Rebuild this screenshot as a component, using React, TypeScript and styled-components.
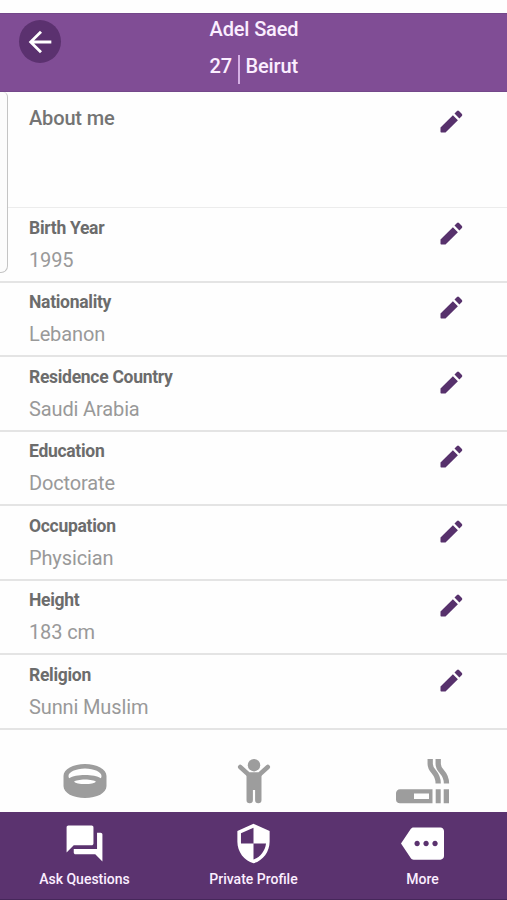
import React from "react";
import styled, { createGlobalStyle } from "styled-components";
import { MdArrowBack, MdMore, MdQuestionAnswer, MdSecurity } from "react-icons/md";

const GlobalStyle = createGlobalStyle`
  * { box-sizing: border-box; }
  body { margin: 0; background: #fefefe; overflow: hidden; }
`;

const Screen = styled.div`
  position: relative;
  display: flex;
  flex-direction: column;
  width: 507px;
  height: 900px;
  padding-top: 12.5px;
  background: #fefefe;
  font-family: Roboto, sans-serif;
`;

const Header = styled.header`
  flex: none;
  display: grid;
  grid-template-columns: 1fr auto 1fr;
  height: 79px;
  padding: 0 18px 0 19px;
  background: #804d95;
  border-top: 1px solid #74488a;
  border-bottom: 1px solid #74488a;
`;

const BackButton = styled.button`
  display: flex;
  align-items: center;
  justify-content: center;
  width: 42px;
  height: 43px;
  margin-top: 6.5px;
  padding: 0;
  border: 0;
  border-radius: 50%;
  background: #5b316f;
  color: #fff;
`;

const Identity = styled.div`
  display: flex;
  flex-direction: column;
  color: #fbeeff;
  font-size: 20px;
  font-weight: 500;
  line-height: 24px;
  letter-spacing: -0.15px;
`;

const Name = styled.div`
  margin-top: 3px;
`;

const Facts = styled.div`
  display: flex;
  margin-top: 13px;
`;

const Divider = styled.span`
  width: 2px;
  height: 29px;
  margin: 1px 6px 0 5.5px;
  background: #d5b0e4;
`;

const Row = styled.section<{ $tall?: boolean }>`
  flex: none;
  display: flex;
  justify-content: space-between;
  height: ${(p) => (p.$tall ? "116.5px" : "74.5px")};
  padding: ${(p) => (p.$tall ? "14.5px" : "9.5px")} 41px 0 29px;
  border-bottom: ${(p) => (p.$tall ? "1px solid #ececec" : "2px solid #e4e4e4")};
`;

const AboutTitle = styled.h2`
  margin: 0;
  color: #747474;
  font-size: 20px;
  font-weight: 500;
  line-height: 25px;
  letter-spacing: -0.15px;
`;

const Label = styled.h3`
  margin: 0;
  color: #6c6c6c;
  font-size: 17.5px;
  font-weight: 700;
  line-height: 20px;
  letter-spacing: -0.29px;
`;

const Value = styled.p`
  margin: 9px 0 0;
  color: #999;
  font-size: 20px;
  line-height: 26px;
  letter-spacing: -0.13px;
`;

const EditButton = styled.button`
  display: flex;
  width: 29px;
  height: 29px;
  margin-top: 1px;
  padding: 0;
  border: 0;
  background: none;
  color: #57316c;
`;

const Traits = styled.div`
  flex: 1;
  display: grid;
  grid-template-columns: repeat(3, 1fr);
  justify-items: center;
  padding-top: 28px;
  color: #9d9d9d;
`;

const NavBar = styled.nav`
  flex: none;
  display: grid;
  grid-template-columns: repeat(3, 1fr);
  height: 88px;
  background: #5b336f;
  border-bottom: 1px solid #46275a;
`;

const NavItem = styled.a`
  display: flex;
  flex-direction: column;
  align-items: center;
  padding-top: 9.5px;
  color: #fff;
`;

const NavLabel = styled.span`
  margin-top: 5px;
  color: #fbeeff;
  font-size: 14px;
  font-weight: 500;
  line-height: 18px;
`;

const EdgePanel = styled.div`
  position: absolute;
  left: 0;
  top: 92px;
  width: 8px;
  height: 181px;
  border: 1px solid #c4c4c4;
  border-width: 0 1px 1px 0;
  border-radius: 0 5px 7px 0;
  background: #fcfcfc;
`;

const Pencil = () => (
  <svg width="29" height="29" viewBox="0 0 29 29" fill="currentColor">
    <path d="M3.500 20.600 15.900 8.200 20.900 13.200 8.500 25.600H4.300a.8.8 0 0 1-.8-.8Z" />
    <path d="M17.500 6.500 20 4Q21 3.200 22 4L24.900 6.900Q25.700 7.900 24.900 8.900L22.400 11.400Z" />
  </svg>
);

const Ring = () => (
  <svg width="44" height="46" viewBox="0 0 44 46" fill="currentColor">
    <path
      fillRule="evenodd"
      d="M22 6C10 6 .5 11 .5 18v10C.5 35 10 40 22 40s21.500-5 21.500-12v-10C43.500 11 34 6 22 6ZM22 10.500c9.500 0 16.500 3.800 16.500 7.500 0 .8-.2 1.500-.7 2.200C34.500 18.200 28.500 17 22 17S9.500 18.200 6.200 20.200c-.5-.7-.7-1.400-.7-2.200C5.500 14.300 12.500 10.500 22 10.500ZM22 21.500c5.500 0 9.500 1 11 2.200-1.500 1.500-5.500 2.300-11 2.300S12.500 25.200 11 23.700C12.500 22.500 16.500 21.500 22 21.500Z"
    />
  </svg>
);

const Child = () => (
  <svg width="34" height="46" viewBox="0 0 34 46" fill="currentColor">
    <circle cx="17" cy="7.200" r="6.200" />
    <path
      d="M3.200 9 11.500 16.500h11L30.800 9"
      fill="none"
      stroke="currentColor"
      strokeWidth="4.500"
      strokeLinecap="round"
      strokeLinejoin="round"
    />
    <path d="M9.500 15h15V42a2.900 2.900 0 0 1-6.400 0V32h-2.200V42a2.900 2.900 0 0 1-6.400 0Z" />
  </svg>
);

const Cigarette = () => (
  <svg width="54" height="46" viewBox="0 0 54 46" fill="currentColor">
    <path
      fillRule="evenodd"
      d="M4 31.200H36.500v14H4A4 4 0 0 1 0 41.400v-6a4 4 0 0 1 4-4.200ZM18 35.400v5.700h15v-5.700Z"
    />
    <path d="M39.700 31.200h5v14h-5zM47.700 31.200H53v14h-5.300z" />
    <path
      d="M34.200 1v5c0 8 8 7.500 8 19.500M42.200 1v5c0 8 8.300 7.500 8.300 19.500"
      fill="none"
      stroke="currentColor"
      strokeWidth="5.300"
    />
  </svg>
);

const details = [
  ["Birth Year", "1995"],
  ["Nationality", "Lebanon"],
  ["Residence Country", "Saudi Arabia"],
  ["Education", "Doctorate"],
  ["Occupation", "Physician"],
  ["Height", "183 cm"],
  ["Religion", "Sunni Muslim"],
];

const navItems = [
  { label: "Ask Questions", Icon: MdQuestionAnswer },
  { label: "Private Profile", Icon: MdSecurity },
  { label: "More", Icon: MdMore },
];

export default function App() {
  return (
    <Screen>
      <GlobalStyle />
      <Header>
        <BackButton aria-label="Back">
          <MdArrowBack size={34} />
        </BackButton>
        <Identity>
          <Name>Adel Saed</Name>
          <Facts>
            27
            <Divider />
            Beirut
          </Facts>
        </Identity>
      </Header>
      <Row $tall>
        <AboutTitle>About me</AboutTitle>
        <EditButton aria-label="Edit about me">
          <Pencil />
        </EditButton>
      </Row>
      {details.map(([label, value]) => (
        <Row key={label}>
          <div>
            <Label>{label}</Label>
            <Value>{value}</Value>
          </div>
          <EditButton aria-label={`Edit ${label}`}>
            <Pencil />
          </EditButton>
        </Row>
      ))}
      <Traits>
        <Ring />
        <Child />
        <Cigarette />
      </Traits>
      <NavBar>
        {navItems.map(({ label, Icon }) => (
          <NavItem key={label}>
            <Icon size={43} />
            <NavLabel>{label}</NavLabel>
          </NavItem>
        ))}
      </NavBar>
      <EdgePanel />
    </Screen>
  );
}
